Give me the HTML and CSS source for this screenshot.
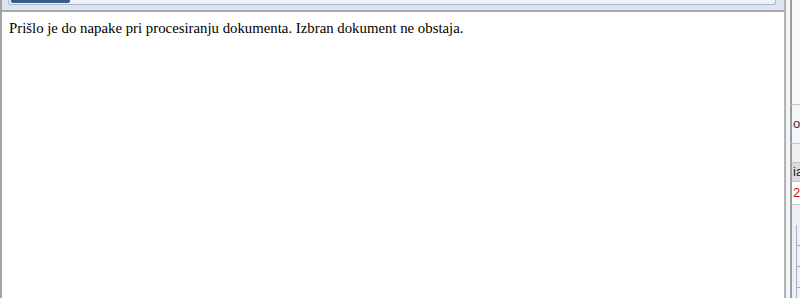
FILE: index.html
```html
<!DOCTYPE html>
<html lang="sl">
  <head>
    <meta charset="UTF-8" />
    <title>Napaka</title>
    <link rel="stylesheet" href="styles.css">
  </head>
  <body>
    <div class="screen">
      <div class="window">
        <div class="titlebar">
          <div class="titlebar-inner">
            <div class="tab"></div>
          </div>
        </div>
        <div class="content">
          <p class="message">Prišlo je do napake pri procesiranju dokumenta. Izbran dokument ne obstaja.</p>
        </div>
      </div>
      <div class="behind">
        <div class="behind-top"></div>
        <div class="behind-row behind-text">o</div>
        <div class="behind-row behind-gap"></div>
        <div class="behind-row behind-head">ia</div>
        <div class="behind-row behind-red">2</div>
        <div class="behind-grid">
          <div class="cell"></div>
          <div class="cell"></div>
          <div class="cell"></div>
          <div class="cell"></div>
        </div>
      </div>
    </div>
  </body>
</html>
```

FILE: styles.css
```css
html, body {
  margin: 0;
  padding: 0;
  height: 100%;
  overflow: hidden;
  background: #fff;
}
.screen {
  display: flex;
  height: 298px;
}
.window {
  width: 786px;
  flex-shrink: 0;
  display: flex;
  flex-direction: column;
  border-left: 2px solid #a3a3a3;
  border-right: 2px solid #b4b4b4;
  box-sizing: border-box;
}
.titlebar {
  height: 12px;
  background: #dbe5f1;
  border-bottom: 2px solid #a9a9a9;
  padding: 0 8px 0 6px;
  box-sizing: border-box;
}
.titlebar-inner {
  height: 4px;
  border: 1px solid #a9b4c4;
  border-top: none;
  border-radius: 0 0 3px 3px;
  background: #eef2f8;
  position: relative;
}
.tab {
  position: absolute;
  left: 2px;
  top: 0;
  width: 59px;
  height: 3px;
  background: #3c5a8c;
  border-radius: 0 0 2px 2px;
}
.content {
  flex: 1;
  background: #fff;
}
.message {
  margin: 8px 0 0 7px;
  font-family: "Liberation Serif", "Times New Roman", serif;
  font-size: 14.8px;
  color: #000;
}
.behind {
  flex: 1;
  min-width: 0;
  display: flex;
  flex-direction: column;
  background: #f4f6f8;
  border-left: 1px solid #e6eef6;
  font-family: "Liberation Sans", Arial, sans-serif;
  font-size: 13px;
  overflow: hidden;
}
.behind-top {
  height: 104px;
  border-left: 2px solid #9b9b9b;
  margin-left: 3px;
  background: #fafafa;
  flex-shrink: 0;
}
.behind-row {
  margin-left: 3px;
  border-left: 2px solid #9b9b9b;
  border-top: 1px solid #c8c8c8;
  padding-left: 1px;
  flex-shrink: 0;
  white-space: nowrap;
}
.behind-text {
  height: 38px;
  line-height: 38px;
  color: #333;
}
.behind-gap {
  height: 18px;
  background: #f0f0f0;
}
.behind-head {
  height: 18px;
  line-height: 18px;
  background: #dcdcdc;
  color: #222;
}
.behind-red {
  height: 22px;
  line-height: 22px;
  color: #e00000;
  background: #fff;
}
.behind-grid {
  flex: 1;
  margin-left: 3px;
  border-left: 2px solid #9b9b9b;
  border-top: 1px solid #c8c8c8;
  display: flex;
  flex-direction: column;
  background: #eef0f3;
  padding-top: 20px;
}
.cell {
  height: 20px;
  flex-shrink: 0;
  border-bottom: 1px solid #9fb0c8;
  margin-left: 4px;
  border-left: 1px solid #9fb0c8;
}
```
